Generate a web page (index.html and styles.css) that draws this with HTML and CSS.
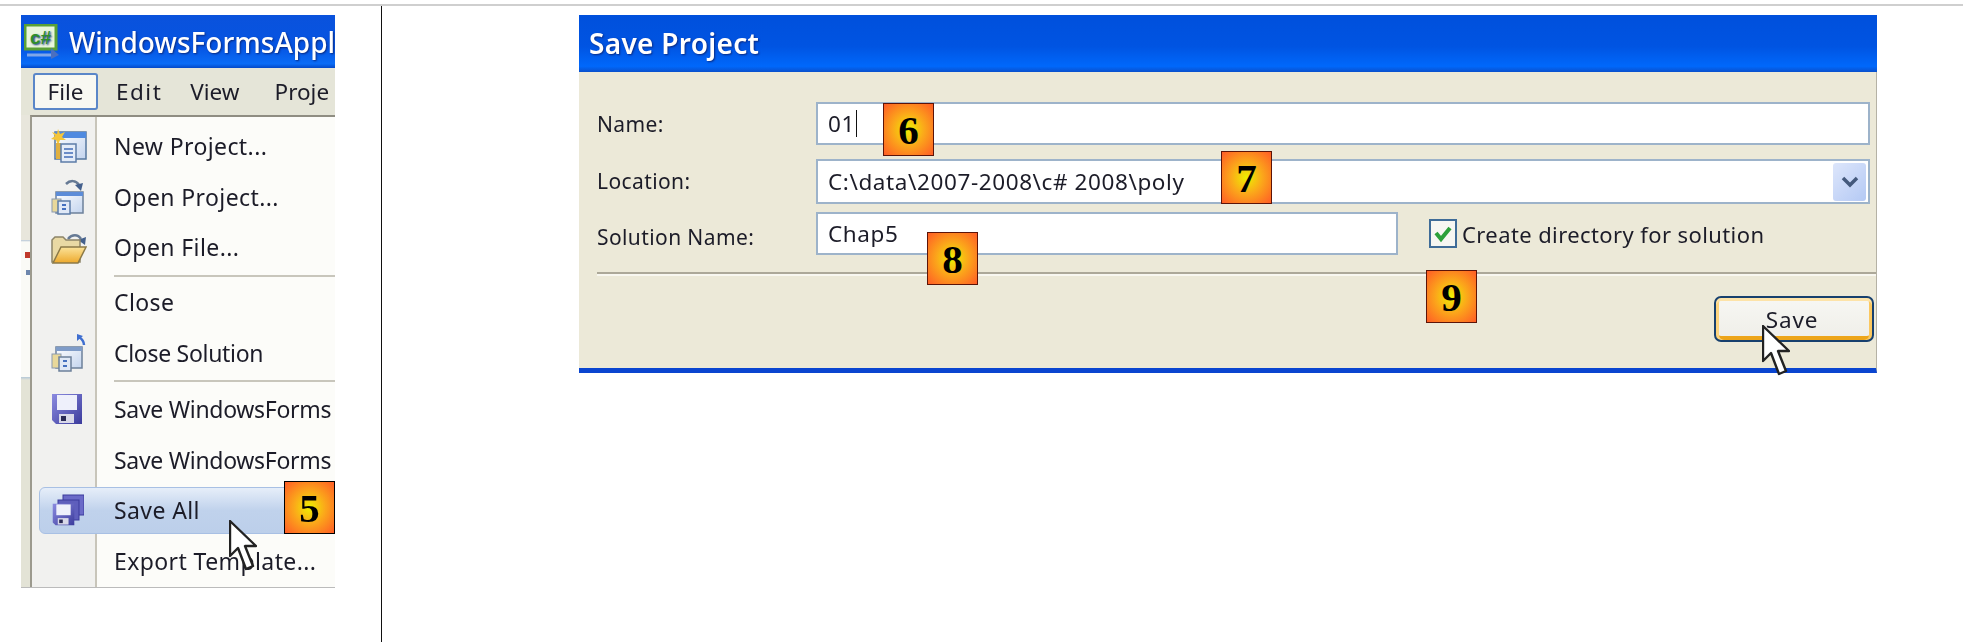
FILE: index.html
```html
<!DOCTYPE html>
<html lang="en">
<head>
    <meta charset="UTF-8">
    <title>Save Project</title>
    <link rel="stylesheet" href="styles.css">
</head>
<body>
    <svg class="defs" width="0" height="0">
        <defs>
            <linearGradient id="pane" x1="0" y1="0" x2="1" y2="1">
                <stop offset="0" stop-color="#ffffff"/>
                <stop offset="1" stop-color="#c3d4ee"/>
            </linearGradient>
            <linearGradient id="folder" x1="0" y1="0" x2="0" y2="1">
                <stop offset="0" stop-color="#fbe39a"/>
                <stop offset="1" stop-color="#eda92c"/>
            </linearGradient>
            <linearGradient id="disk" x1="0" y1="0" x2="1" y2="1">
                <stop offset="0" stop-color="#8b8be0"/>
                <stop offset="1" stop-color="#3b3b9c"/>
            </linearGradient>
            <symbol id="cursor" viewBox="0 0 28 52">
                <path d="M1 1V36L9 28 17 49 24 46 16 26H27Z" fill="#fff" stroke="#222" stroke-width="2.4" stroke-linejoin="round"/>
            </symbol>
            <symbol id="disk-shape" viewBox="0 0 32 32">
                <path d="M1 1H31V31H5L1 27Z" fill="url(#disk)"/>
                <rect x="6" y="2" width="20" height="15" fill="#eef0fb"/>
                <rect x="8" y="21" width="15" height="9" fill="#d8d8e8"/>
                <rect x="10" y="23" width="5" height="5" fill="#2a2a55"/>
            </symbol>
        </defs>
    </svg>

    <div class="top-rule"></div>

    <div class="page">
        <!-- Visual Studio file menu -->
        <div class="side">
            <div class="vs-shot">
                <div class="vs-window">
                    <div class="vs-title">
                        <svg class="vs-logo" width="38" height="36" viewBox="0 0 38 36">
                            <rect x="1" y="1" width="31" height="24" fill="#e9f6dc" stroke="#5aa036" stroke-width="3"/>
                            <text x="6" y="20" class="logo-text">c#</text>
                            <path d="M3 31H28" stroke="#7fa6e8" stroke-width="3"/>
                            <path d="M27 24L35 31 27 35Z" fill="#4a6fc0"/>
                        </svg>
                        <span>WindowsFormsAppl</span>
                    </div>
                    <div class="vs-menubar">
                        <span class="vs-file">File</span>
                        <span class="vs-edit">Edit</span>
                        <span class="vs-view">View</span>
                        <span class="vs-project">Proje</span>
                    </div>
                    <div class="vs-body">
                        <div class="vs-strip"></div>
                        <div class="menu">
                            <div class="item">
                                <span class="item-icon">
                                    <svg width="36" height="34" viewBox="0 0 36 34">
                                        <rect x="4" y="3" width="31" height="27" fill="url(#pane)" stroke="#56779f" stroke-width="1.5"/>
                                        <rect x="4" y="3" width="31" height="6" fill="#4f8ae0"/>
                                        <path d="M7 0L9 5 14 3 11 8 15 11 9 11 7 16 5 11 0 10 4 7 1 3 6 5Z" fill="#f4c53a"/>
                                        <rect x="5" y="14" width="5" height="16" fill="#e0b040"/>
                                        <rect x="10" y="15" width="15" height="18" fill="#e4ecf8" stroke="#5c7ca8" stroke-width="1.5"/>
                                        <path d="M13 20H22M13 24H22M13 28H22" stroke="#6a8cc8" stroke-width="2"/>
                                    </svg>
                                </span>
                                <span>New Project...</span>
                            </div>
                            <div class="item">
                                <span class="item-icon">
                                    <svg width="34" height="37" viewBox="0 0 34 37">
                                        <path d="M15 6C19 2 25 2 28 7" fill="none" stroke="#667a94" stroke-width="2.5"/>
                                        <path d="M24 7L32 5 30 13Z" fill="#44608c"/>
                                        <rect x="5" y="14" width="27" height="21" fill="url(#pane)" stroke="#6c809a" stroke-width="1.5"/>
                                        <rect x="5" y="14" width="27" height="4" fill="#5c8cd8"/>
                                        <rect x="1" y="21" width="9" height="13" fill="#e8d89a" stroke="#8a9ab0"/>
                                        <rect x="7" y="23" width="12" height="13" fill="#dfe8f6" stroke="#5c7ca8" stroke-width="1.5"/>
                                        <path d="M11 27H15M11 31H15" stroke="#4470c0" stroke-width="2"/>
                                    </svg>
                                </span>
                                <span>Open Project...</span>
                            </div>
                            <div class="item">
                                <span class="item-icon">
                                    <svg width="36" height="33" viewBox="0 0 36 33">
                                        <path d="M17 8C21 3 27 3 30 8" fill="none" stroke="#667a94" stroke-width="2.5"/>
                                        <path d="M27 9L35 6 34 14Z" fill="#44608c"/>
                                        <path d="M1 9L4 6H12L15 9H29V31H1Z" fill="#e9d9a4" stroke="#8c8468" stroke-width="1.5"/>
                                        <path d="M10 16H35L27 32H2Z" fill="url(#folder)" stroke="#8c7a48" stroke-width="1.5"/>
                                    </svg>
                                </span>
                                <span>Open File...</span>
                            </div>
                            <div class="sep sep-first"></div>
                            <div class="item">
                                <span class="item-icon"></span>
                                <span>Close</span>
                            </div>
                            <div class="item">
                                <span class="item-icon">
                                    <svg width="36" height="38" viewBox="0 0 36 38">
                                        <path d="M33 11C33 7 31 5 28 3" fill="none" stroke="#3f6fd0" stroke-width="2.5"/>
                                        <path d="M26 0V7L32 2Z" fill="#3f6fd0"/>
                                        <rect x="5" y="13" width="26" height="21" fill="url(#pane)" stroke="#6c809a" stroke-width="1.5"/>
                                        <rect x="5" y="13" width="26" height="4" fill="#7f9cc8"/>
                                        <rect x="1" y="20" width="9" height="14" fill="#e8d89a" stroke="#8a9ab0"/>
                                        <rect x="8" y="23" width="12" height="14" fill="#dfe8f6" stroke="#6c809a" stroke-width="1.5"/>
                                        <path d="M12 27H16M12 32H16" stroke="#4470c0" stroke-width="2"/>
                                    </svg>
                                </span>
                                <span class="item-tight">Close Solution</span>
                            </div>
                            <div class="sep sep-second"></div>
                            <div class="item">
                                <span class="item-icon">
                                    <svg width="32" height="32"><use href="#disk-shape"/></svg>
                                </span>
                                <span class="item-tight">Save WindowsForms</span>
                            </div>
                            <div class="item">
                                <span class="item-icon"></span>
                                <span class="item-tight">Save WindowsForms</span>
                            </div>
                            <div class="item item-active">
                                <span class="item-icon">
                                    <svg width="32" height="32" viewBox="0 0 32 32">
                                        <rect x="11" y="1" width="21" height="20" fill="#6a6ac8" stroke="#3b3b9c"/>
                                        <rect x="6" y="6" width="21" height="20" fill="#5e5ebc" stroke="#3b3b9c"/>
                                        <use href="#disk-shape" x="0" y="9" width="23" height="23"/>
                                    </svg>
                                </span>
                                <span>Save All</span>
                            </div>
                            <div class="item">
                                <span class="item-icon"></span>
                                <span>Export Template...</span>
                            </div>
                        </div>
                    </div>
                </div>
                <div class="badge badge-five">5</div>
                <svg class="cursor cursor-menu"><use href="#cursor"/></svg>
            </div>
        </div>

        <!-- Save Project dialog -->
        <div class="main">
            <div class="dialog-shot">
                <div class="dialog">
                    <div class="dialog-title">Save Project</div>
                    <div class="dialog-body">
                        <div class="form">
                            <label class="field-label">Name:</label>
                            <div class="field field-name">01<span class="caret"></span></div>

                            <label class="field-label">Location:</label>
                            <div class="field field-location">
                                <span>C:\data\2007-2008\c# 2008\poly</span>
                                <span class="combo-btn">
                                    <svg width="18" height="12" viewBox="0 0 18 12">
                                        <path d="M2 2L9 9 16 2" fill="none" stroke="#44597c" stroke-width="3.5"/>
                                    </svg>
                                </span>
                            </div>

                            <label class="field-label field-label-low">Solution Name:</label>
                            <div class="solution-row">
                                <div class="field field-solution">Chap5</div>
                                <div class="check-wrap">
                                    <span class="check-box">
                                        <svg width="20" height="18" viewBox="0 0 20 18">
                                            <path d="M3 8L8 14 17 3" fill="none" stroke="#2ba03a" stroke-width="4"/>
                                        </svg>
                                    </span>
                                    <span>Create directory for solution</span>
                                </div>
                            </div>
                        </div>
                        <div class="dialog-sep"></div>
                        <div class="dialog-actions">
                            <div class="save-btn">Save</div>
                        </div>
                    </div>
                </div>
                <div class="badge badge-six">6</div>
                <div class="badge badge-seven">7</div>
                <div class="badge badge-eight">8</div>
                <div class="badge badge-nine">9</div>
                <svg class="cursor cursor-save"><use href="#cursor"/></svg>
            </div>
        </div>
    </div>
</body>
</html>
```

FILE: styles.css
```css
html, body {
    margin: 0;
    height: 100%;
    overflow: hidden;
    background: #fff;
}
body {
    font-family: "Noto Sans", "Open Sans", sans-serif;
    color: #1c1c28;
}
.defs {
    position: absolute;
}
.top-rule {
    margin-top: 4px;
    height: 2px;
    background: #cfcfcf;
}
.page {
    display: flex;
    height: 636px;
}
.side {
    width: 381px;
    border-right: 1px solid #111;
    flex-shrink: 0;
}

/* left screenshot */
.vs-shot {
    position: relative;
    margin: 9px 0 0 21px;
    width: 314px;
}
.vs-window {
    width: 314px;
    height: 573px;
    overflow: hidden;
    border-bottom: 1px solid #bbb;
    box-sizing: border-box;
    font-size: 23px;
    letter-spacing: 0.4px;
    filter: blur(0.55px);
}
.vs-title {
    height: 53px;
    display: flex;
    align-items: center;
    gap: 7px;
    padding-left: 3px;
    background: linear-gradient(#0a52dc, #0654e2 60%, #0a6cf6 92%, #0448c8);
    color: #fff;
    font-size: 28px;
    font-weight: 500;
    letter-spacing: 0;
    white-space: nowrap;
    text-shadow: 1px 1px 2px #0a2a80;
}
.vs-logo {
    flex-shrink: 0;
}
.logo-text {
    font: bold 19px "Liberation Sans", sans-serif;
    fill: #2f8f2a;
}
.vs-menubar {
    height: 47px;
    display: flex;
    align-items: center;
    background: #e5e5d8;
    font-size: 22.5px;
    letter-spacing: 0;
    white-space: nowrap;
}
.vs-menubar span {
    flex-shrink: 0;
}
.vs-file {
    margin-left: 12px;
    width: 65px;
    height: 37px;
    line-height: 33px;
    text-align: center;
    box-sizing: border-box;
    background: #f8f8f2;
    border: 2px solid #5a86c8;
    border-radius: 3px;
}
.vs-edit {
    margin-left: 18px;
    letter-spacing: 1.5px;
}
.vs-view {
    margin-left: 28px;
}
.vs-project {
    margin-left: 35px;
}
.vs-body {
    display: flex;
    height: 472px;
}
.vs-strip {
    width: 9px;
    flex-shrink: 0;
    background:
        linear-gradient(#c0392b, #c0392b) 4px 137px / 5px 6px no-repeat,
        linear-gradient(#6d86ac, #6d86ac) 5px 155px / 4px 5px no-repeat,
        linear-gradient(#e8e6dc 0, #e8e6dc 125px, #b4c4d4 125px, #fafaf6 127px, #fafaf6 262px, #b4c8d8 262px, #e3e3d6 265px);
}
.menu {
    flex: 1;
    border-left: 2px solid #9c9a8e;
    border-top: 2px solid #8f8d82;
    padding-top: 4px;
    background: linear-gradient(90deg, #f1f1ef 0, #f1f1ef 63px, #c8c5ba 63px, #c8c5ba 65px, #fcfcf9 65px);
    white-space: nowrap;
}
.item {
    display: flex;
    align-items: center;
    height: 50.5px;
}
.item-tight {
    letter-spacing: -0.3px;
}
.item-icon {
    width: 82px;
    display: flex;
    padding-left: 19px;
    box-sizing: border-box;
    flex-shrink: 0;
}
.item-active {
    height: 47px;
    margin: 1.75px 0 1.75px 7px;
    border: 1px solid #a8c0e4;
    border-radius: 6px 0 0 6px;
    box-sizing: border-box;
    background: linear-gradient(#e6eef9, #c0d2ec 50%, #bccfea);
}
.item-active .item-icon {
    width: 74px;
    padding-left: 12px;
}
.sep {
    position: relative;
}
.sep-first {
    height: 4.5px;
}
.sep-second {
    height: 6px;
}
.sep::after {
    content: "";
    position: absolute;
    left: 82px;
    right: 0;
    top: 2px;
    height: 2px;
    background: #c8c6bc;
}

/* dialog */
.main {
    flex: 1;
}
.dialog-shot {
    position: relative;
    margin: 9px 0 0 197px;
    width: 1298px;
}
.dialog {
    height: 358px;
    box-sizing: border-box;
    font-size: 22.5px;
    letter-spacing: 0.6px;
    filter: blur(0.5px);
}
.dialog-title {
    height: 57px;
    box-sizing: border-box;
    padding: 10px 0 0 10px;
    background: linear-gradient(#0050dc, #0054e2 55%, #0068fb 90%, #0a50cc);
    color: #fff;
    font-size: 28px;
    font-weight: 600;
    letter-spacing: 0.3px;
    line-height: 36px;
    text-shadow: 1px 1px 2px #0a2a80;
}
.dialog-body {
    height: 301px;
    box-sizing: border-box;
    padding: 30px 0 0 18px;
    background: #ece9d8;
    border-right: 1px solid #b5b2a5;
    border-bottom: 5px solid #0a45d0;
}
.form {
    display: grid;
    grid-template-columns: 219px 1054px;
    grid-template-rows: 57px 53px 43px;
    align-items: start;
}
.field-label {
    height: 43px;
    display: flex;
    align-items: center;
    font-size: 21px;
    letter-spacing: 0.4px;
}
.field-label-low {
    padding-top: 3px;
}
.solution-row {
    display: flex;
    align-items: center;
}
.field {
    box-sizing: border-box;
    display: flex;
    align-items: center;
    padding-left: 10px;
    background: #fff;
    border: 2px solid #9db3ca;
    white-space: nowrap;
}
.field-name {
    height: 43px;
}
.field-location {
    height: 45px;
    justify-content: space-between;
    padding-right: 2px;
}
.field-solution {
    width: 582px;
    height: 43px;
    flex-shrink: 0;
}
.caret {
    display: inline-block;
    width: 1px;
    height: 27px;
    margin-left: 1px;
    background: #111;
}
.combo-btn {
    width: 33px;
    height: 38px;
    display: flex;
    align-items: center;
    justify-content: center;
    border-radius: 3px;
    background: linear-gradient(135deg, #dde6fb, #b4c9f4);
}
.check-wrap {
    display: flex;
    align-items: center;
    gap: 5px;
    margin-left: 31px;
    font-size: 22px;
    letter-spacing: 0.4px;
    white-space: nowrap;
}
.check-box {
    width: 28px;
    height: 29px;
    box-sizing: border-box;
    display: flex;
    align-items: center;
    justify-content: center;
    background: #f6f6f2;
    border: 2px solid #3f6c98;
}
.dialog-sep {
    margin-top: 17px;
    height: 2px;
    background: #aca899;
    border-bottom: 2px solid #f8f7f0;
}
.dialog-actions {
    display: flex;
    justify-content: flex-end;
    padding: 20px 2px 0 0;
}
.save-btn {
    width: 160px;
    height: 46px;
    box-sizing: border-box;
    display: flex;
    align-items: center;
    justify-content: center;
    padding-right: 4px;
    letter-spacing: 0.8px;
    background: linear-gradient(#f7f7f3, #efeee8);
    border: 2px solid #17406e;
    border-radius: 7px;
    box-shadow: inset 0 3px 0 #fde3a8, inset 3px 0 0 #fcd47f, inset -3px 0 0 #fbc860, inset 0 -4px 0 #eda51a;
}

/* numbered markers and cursors */
.badge {
    position: absolute;
    width: 51px;
    height: 53px;
    box-sizing: border-box;
    display: flex;
    align-items: center;
    justify-content: center;
    border: 1px solid #5c1408;
    background: radial-gradient(#eef000 0, #fba81a 45%, #ff5c26 100%);
    color: #000;
    font: bold 41px "Liberation Serif", serif;
}
.badge-five {
    left: 263px;
    top: 466px;
    border-color: #000;
}
.badge-six {
    left: 304px;
    top: 88px;
}
.badge-seven {
    left: 642px;
    top: 136px;
}
.badge-eight {
    left: 348px;
    top: 217px;
}
.badge-nine {
    left: 847px;
    top: 255px;
}
.cursor {
    position: absolute;
    width: 28px;
    height: 52px;
}
.cursor-menu {
    left: 208px;
    top: 505px;
}
.cursor-save {
    left: 1183px;
    top: 310px;
}
```
